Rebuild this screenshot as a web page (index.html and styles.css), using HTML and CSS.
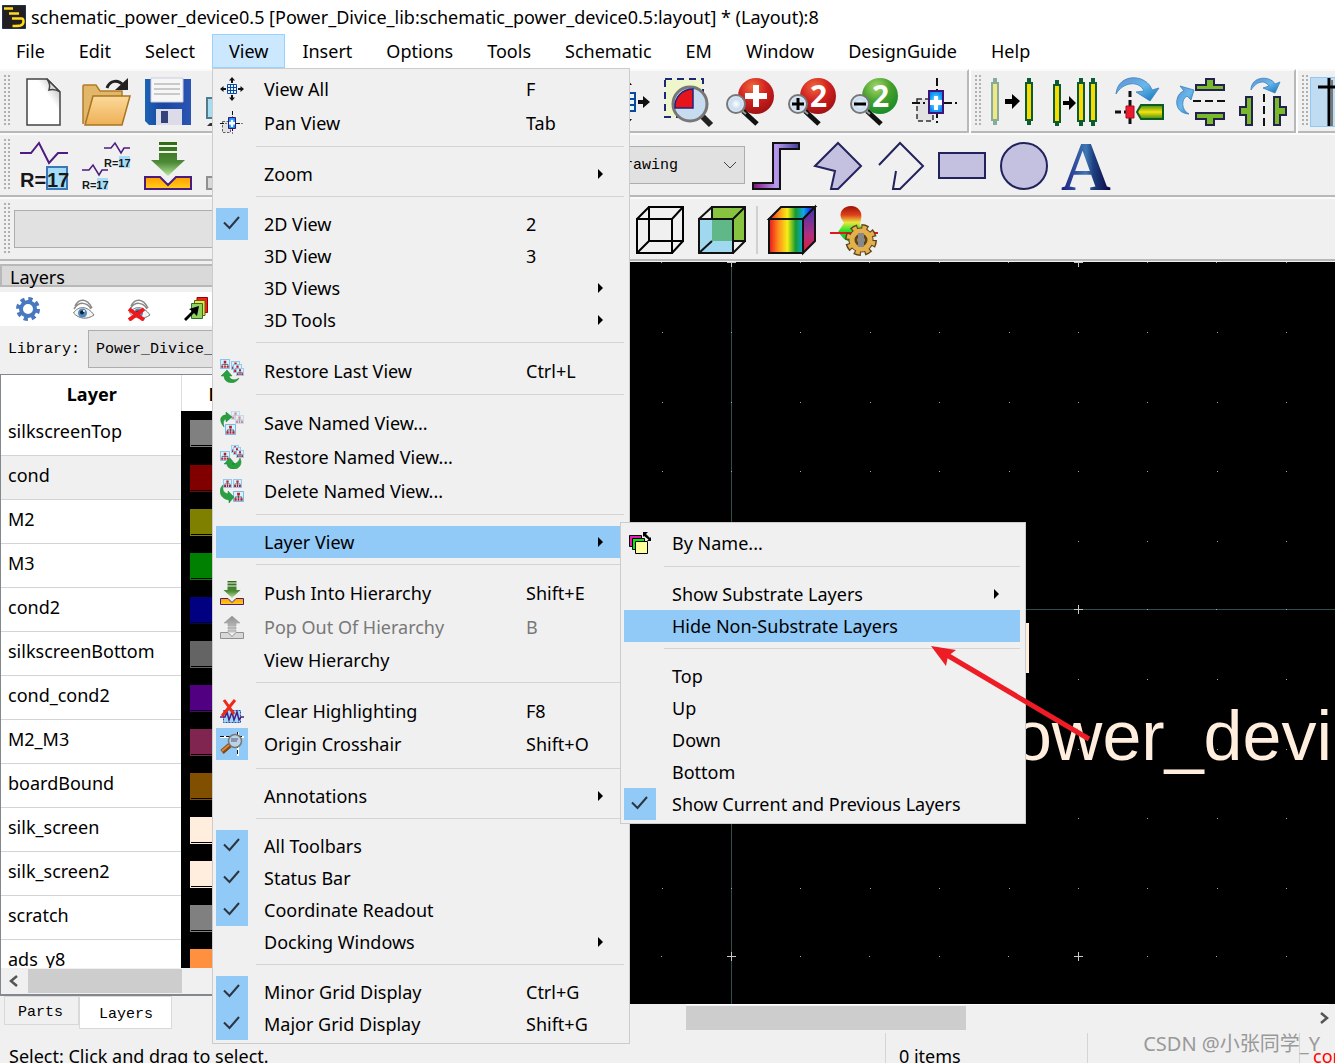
FILE: index.html
```html
<!DOCTYPE html>
<html lang="en">
<head>
<meta charset="utf-8">
<title>schematic_power_device0.5 (Layout):8</title>
<link rel="stylesheet" href="styles.css">
</head>
<body>
<svg class="defs" aria-hidden="true">
  <defs>
    <linearGradient id="gGreen" x1="0" y1="0" x2="0" y2="1"><stop offset="0" stop-color="#2f6b12"/><stop offset=".6" stop-color="#4d8a38"/><stop offset="1" stop-color="#b5e69a"/></linearGradient>
    <linearGradient id="gGray" x1="0" y1="0" x2="0" y2="1"><stop offset="0" stop-color="#8c8c8c"/><stop offset="1" stop-color="#d0d0d0"/></linearGradient>
    <linearGradient id="gGold" x1="0" y1="0" x2="0" y2="1"><stop offset="0" stop-color="#ff9d00"/><stop offset="1" stop-color="#ffd01c"/></linearGradient>
    <linearGradient id="gFolder" x1="0" y1="0" x2="0" y2="1"><stop offset="0" stop-color="#fbd99a"/><stop offset="1" stop-color="#eeb056"/></linearGradient>
    <linearGradient id="gPage" x1="1" y1="0" x2=".4" y2=".6"><stop offset="0" stop-color="#aaa"/><stop offset=".6" stop-color="#fff"/></linearGradient>
    <linearGradient id="gSave" x1="0" y1="0" x2="1" y2="0"><stop offset="0" stop-color="#1d62b5"/><stop offset=".4" stop-color="#1a45a0"/><stop offset="1" stop-color="#2b55b4"/></linearGradient>
    <linearGradient id="gBlue" x1="0" y1="0" x2="1" y2="1"><stop offset="0" stop-color="#5f8fd0"/><stop offset=".5" stop-color="#69b8ea"/><stop offset="1" stop-color="#0d70b8"/></linearGradient>
    <linearGradient id="gPort" x1="0" y1="0" x2="0" y2="1"><stop offset="0" stop-color="#3f8a1c"/><stop offset=".5" stop-color="#f6e40c"/><stop offset="1" stop-color="#3f8a1c"/></linearGradient>
    <linearGradient id="gLetter" x1="0" y1="0" x2="1" y2="0"><stop offset="0" stop-color="#1c1c80"/><stop offset=".5" stop-color="#3f78b4"/><stop offset=".65" stop-color="#1d3f80"/><stop offset="1" stop-color="#0b0340"/></linearGradient>
    <linearGradient id="gTrace" x1="0" y1="0" x2="1" y2="0"><stop offset="0" stop-color="#84107c"/><stop offset=".5" stop-color="#b79af0"/><stop offset="1" stop-color="#3f3f98"/></linearGradient>
    <linearGradient id="gRain" x1="0" y1="0" x2="1" y2="0"><stop offset="0" stop-color="#e8131b"/><stop offset=".2" stop-color="#ff8a1c"/><stop offset=".4" stop-color="#f5ee14"/><stop offset=".58" stop-color="#129a30"/><stop offset=".75" stop-color="#10a8e8"/><stop offset=".88" stop-color="#1040ff"/><stop offset="1" stop-color="#202090"/></linearGradient>
    <linearGradient id="gSide" x1="0" y1="0" x2="0" y2="1"><stop offset="0" stop-color="#3b36b0"/><stop offset=".6" stop-color="#b02f80"/><stop offset="1" stop-color="#e01b30"/></linearGradient>
    <linearGradient id="gLobe" x1="0" y1="0" x2="0" y2="1"><stop offset="0" stop-color="#9c1208"/><stop offset=".22" stop-color="#e0401c"/><stop offset=".4" stop-color="#e8e83c"/><stop offset=".6" stop-color="#2ee02e"/><stop offset="1" stop-color="#089a50"/></linearGradient>
    <radialGradient id="gRed" cx=".4" cy=".25" r=".8"><stop offset="0" stop-color="#f0683c"/><stop offset=".5" stop-color="#cf2020"/><stop offset="1" stop-color="#9c1010"/></radialGradient>
    <radialGradient id="gGrn" cx=".4" cy=".25" r=".8"><stop offset="0" stop-color="#a4d86c"/><stop offset=".5" stop-color="#46a02c"/><stop offset="1" stop-color="#128a28"/></radialGradient>
    <radialGradient id="gLens"><stop offset="0" stop-color="#fff"/><stop offset=".6" stop-color="#c8dcf0"/><stop offset="1" stop-color="#e8f0f8"/></radialGradient>
    <radialGradient id="gPan"><stop offset="0" stop-color="#fff"/><stop offset=".5" stop-color="#3cc0ff"/><stop offset="1" stop-color="#0a8cf0"/></radialGradient>
    <pattern id="grid" x="-10" y="-10" width="347" height="347" patternUnits="userSpaceOnUse">
      <path d="M6 10.500h9M10.500 6v9" stroke="#c8c8c8"/>
      <path stroke="#a8a8a8" stroke-dasharray="1 68 1 69 1 68 1 69 1 68" d="M79 10.500h280M10 80.500h345M10 150.500h345M10 219.500h345M10 289.500h345"/>
    </pattern>
    <symbol id="viewall" viewBox="0 0 24 24">
      <path fill="#111" d="M12 0l3 3.500h-2V6h-2V3.500H9zM12 24l3-3.500h-2V18h-2v2.500H9zM0 12l3.500-3v2H6v2H3.500v2zM24 12l-3.500-3v2H18v2h2.500v2z"/>
      <path fill="#e8f6ff" stroke="#0a4a9c" d="M7.500 7.500h9v9h-9zM10.500 7.500v9M13.500 7.500v9M7.500 10.500h9M7.500 13.500h9"/>
    </symbol>
    <symbol id="panview" viewBox="0 0 48 48">
      <path fill="#e2e2e2" stroke="#333" stroke-width="1.500" stroke-dasharray="5 3" d="M5 21h16v22H5z"/>
      <path stroke="#111" stroke-width="2" stroke-dasharray="8 3 2 3" fill="none" d="M25 0v48M0 25h48"/>
      <path fill="url(#gPan)" stroke="#3f1478" stroke-width="2" d="M17 13h14v22H17z"/>
      <path fill="#fff" d="M22 18h4v4h4v5h-4v5h-4v-5h-4v-5h4z"/>
    </symbol>
    <symbol id="push" viewBox="0 0 48 48">
      <path fill="url(#gGreen)" d="M15 0h18v3H15zM15 5h18v4H15zM15 11h18v7h8L24 34 7 18h8z"/>
      <path fill="url(#gGold)" stroke="#4a1c7c" stroke-width="2" d="M1 35h15l8 8 8-8h15v12H1z"/>
    </symbol>
    <symbol id="pop" viewBox="0 0 24 24">
      <path fill="url(#gGray)" stroke="#999" stroke-width=".5" d="M12 1l8 7h-4v3H8V8H4zM8 12h8v2H8zM8 15h8v2H8z"/>
      <path fill="#d8d8d8" stroke="#909090" d="M.5 17.500H8l4 4 4-4h7.500v6H.5z"/>
    </symbol>
    <symbol id="tree" viewBox="0 0 12 12">
      <path fill="#d8f0ff" stroke="#68b4e4" d="M.5.5h11v11H.5z"/><path fill="#c01828" d="M4.500 2h3v3h-3zM1.500 8h2.500v2.500H1.500zM5 8h2v2.500H5zM8 8h2.500v2.500H8z"/><path stroke="#333" stroke-width=".8" fill="none" d="M6 5v3M2.500 8V6.500h7V8"/>
    </symbol>
    <symbol id="lens" viewBox="0 0 48 48">
      <path stroke="#111" stroke-width="5" d="M17 33l14 13"/><path stroke="#999" stroke-width="2" d="M15 32l5 4"/>
      <circle cx="10" cy="26" r="9" fill="url(#gLens)" stroke="#777" stroke-width="2"/>
    </symbol>
    <symbol id="check" viewBox="0 0 32 32"><path fill="none" stroke="#2c3440" stroke-width="2" d="M8 14.500l5.500 5.500L23 9"/></symbol>
    <symbol id="arr" viewBox="0 0 6 10"><path d="M0 0l5 5-5 5z"/></symbol>
    <symbol id="eye" viewBox="0 0 24 24">
      <path fill="none" stroke="#888" stroke-width="1.500" d="M3 9c4-8 12-8 17 2M2 12C7 4 15 5 19 12"/>
      <path fill="#f4f4f4" stroke="#777" d="M1.500 16C6 9 15 8 22 18c-7 5-15 4-20.500-2z"/>
      <circle cx="10.500" cy="16" r="4.500" fill="#5088c0"/><circle cx="10" cy="15.500" r="2" fill="#123"/><circle cx="12" cy="14" r="1" fill="#fff"/>
    </symbol>
  </defs>
</svg>

<header class="titlebar">
  <svg class="logo" viewBox="0 0 24 24"><rect width="24" height="24" rx="2" fill="#231f20"/><path d="M.5.5h23v23H.5z" fill="none" stroke="#1c3450"/><path d="M2 3.500h9M7 8.500h10M10 13.500h9.500q2 0 2 3t-3 4q-2 .5-8 .5" fill="none" stroke="#ffd91a" stroke-width="2.500"/></svg>
  <h1>schematic_power_device0.5 [Power_Divice_lib:schematic_power_device0.5:layout] * (Layout):8</h1>
</header>

<nav class="menubar" aria-label="Main menu">
  <button>File</button><button>Edit</button><button>Select</button>
  <div class="open">
    <button aria-expanded="true">View</button>
    <div class="menu" role="menu">
      <button class="item tall"><svg class="ico"><use href="#viewall"/></svg><span>View All</span><kbd>F</kbd></button>
      <button class="item tall"><svg class="ico"><use href="#panview"/></svg><span>Pan View</span><kbd>Tab</kbd></button>
      <hr>
      <button class="item"><i></i><span>Zoom</span><kbd></kbd><svg class="arr"><use href="#arr"/></svg></button>
      <hr>
      <button class="item" role="menuitemcheckbox" aria-checked="true"><svg class="chk"><use href="#check"/></svg><span>2D View</span><kbd>2</kbd></button>
      <button class="item"><i></i><span>3D View</span><kbd>3</kbd></button>
      <button class="item"><i></i><span>3D Views</span><kbd></kbd><svg class="arr"><use href="#arr"/></svg></button>
      <button class="item"><i></i><span>3D Tools</span><kbd></kbd><svg class="arr"><use href="#arr"/></svg></button>
      <hr>
      <button class="item tall"><svg class="ico" viewBox="0 0 24 24"><use href="#tree" x="0" y="0" width="10" height="10"/><use href="#tree" x="11" y="2" width="9" height="9"/><use href="#tree" x="13" y="5" width="9" height="9"/><use href="#tree" x="16" y="9" width="8" height="8"/><path fill="#28a040" stroke="#1c7c30" stroke-width=".5" d="M1 17l6-6 5 6H9c1 4 6 5 10 2-3 7-15 6-15-2z"/></svg><span>Restore Last View</span><kbd>Ctrl+L</kbd></button>
      <hr>
      <button class="item tall"><svg class="ico" viewBox="0 0 24 24"><g opacity=".5"><use href="#tree" x="11" y="0" width="9" height="9"/><use href="#tree" x="15" y="4" width="9" height="9"/></g><use href="#tree" x="5" y="13" width="11" height="11"/><path fill="#28a040" stroke="#1c7c30" stroke-width=".5" d="M6 1l6 5-6 5V8c-3 1-3 4-2 8C-2 9 1 4 6 4z"/></svg><span>Save Named View...</span></button>
      <button class="item tall"><svg class="ico" viewBox="0 0 24 24"><use href="#tree" x="11" y="0" width="8" height="8"/><use href="#tree" x="13" y="2" width="8" height="8"/><use href="#tree" x="16" y="5" width="8" height="8"/><use href="#tree" x="0" y="6" width="10" height="10"/><path fill="#28a040" stroke="#1c7c30" stroke-width=".5" d="M4 19l6-6 5 6h-3c5 0 7-3 8-6 3 6-1 11-6 11-4 0-7-2-7-5z"/></svg><span>Restore Named View...</span></button>
      <button class="item tall"><svg class="ico" viewBox="0 0 24 24"><use href="#tree" x="3" y="0" width="9" height="9"/><use href="#tree" x="13" y="0" width="9" height="9"/><use href="#tree" x="13" y="12" width="11" height="11"/><path fill="#28a040" stroke="#1c7c30" stroke-width=".5" d="M3 6c-1 7 2 8 5 9v-3l6 6-5 6v-3C1 20-3 12 3 6z"/></svg><span>Delete Named View...</span></button>
      <hr>
      <div class="branch">
        <button class="item active" aria-expanded="true"><i></i><span>Layer View</span><kbd></kbd><svg class="arr"><use href="#arr"/></svg></button>
        <div class="menu submenu" role="menu">
          <button class="item tall"><svg class="ico" viewBox="0 0 24 24"><g stroke="#000"><path fill="#e818b8" d="M1.500 4.500h12v11h-12z"/><path fill="#00f000" d="M4.500 7.500h12v11h-12z"/><path fill="#ffffa0" d="M7.500 10.500h12v12h-12z"/></g><path d="M15 1h5l-2 2 4 4 1-1v4h-4l1.500-1.500L16 5l-1 1z"/></svg><span>By Name...</span></button>
          <hr>
          <button class="item"><i></i><span>Show Substrate Layers</span><kbd></kbd><svg class="arr"><use href="#arr"/></svg></button>
          <button class="item active"><i></i><span>Hide Non-Substrate Layers</span></button>
          <hr>
          <button class="item"><i></i><span>Top</span></button>
          <button class="item"><i></i><span>Up</span></button>
          <button class="item"><i></i><span>Down</span></button>
          <button class="item"><i></i><span>Bottom</span></button>
          <button class="item" role="menuitemcheckbox" aria-checked="true"><svg class="chk"><use href="#check"/></svg><span>Show Current and Previous Layers</span></button>
          <svg class="pointer" viewBox="0 0 162 98"><path d="M16 9L158 93" stroke="#ee1c25" stroke-width="5" fill="none"/><path fill="#ee1c25" d="M0 0l25 4-8 6-2 10z"/></svg>
        </div>
      </div>
      <hr>
      <button class="item tall"><svg class="ico"><use href="#push"/></svg><span>Push Into Hierarchy</span><kbd>Shift+E</kbd></button>
      <button class="item tall" disabled><svg class="ico"><use href="#pop"/></svg><span>Pop Out Of Hierarchy</span><kbd>B</kbd></button>
      <button class="item"><i></i><span>View Hierarchy</span></button>
      <hr>
      <button class="item tall"><svg class="ico" viewBox="0 0 24 24"><path fill="#9cd8f8" stroke="#1c50b0" stroke-dasharray="2 1" d="M3.500 11.500h17v12h-17z"/><path fill="none" stroke="#4a1c80" stroke-width="1.500" d="M0 18h5l2-5 2 8 3-8 2 8 3-8 2 8 2-3h3"/><path fill="none" stroke="#f02818" stroke-width="3" d="M4 1l10 14M15 1L2 17"/></svg><span>Clear Highlighting</span><kbd>F8</kbd></button>
      <button class="item" role="menuitemcheckbox" aria-checked="true"><svg class="chk" viewBox="0 0 32 32"><path stroke="#fff" stroke-width="2" d="M4 9h24M22 4v24"/><path stroke="#111" stroke-dasharray="4 2" d="M4 8.500h24M21.500 4v24"/><path stroke="#8a4810" stroke-width="5" d="M14 17l-8 7"/><path stroke="#d88840" stroke-width="2" d="M13 17l-7 6"/><circle cx="19" cy="13" r="6.500" fill="#bcd4e4" stroke="#777" stroke-width="1.500"/><path stroke="#557" d="M15 11h7M15 13h6"/></svg><span>Origin Crosshair</span><kbd>Shift+O</kbd></button>
      <hr class="late">
      <button class="item"><i></i><span>Annotations</span><kbd></kbd><svg class="arr"><use href="#arr"/></svg></button>
      <hr>
      <button class="item" role="menuitemcheckbox" aria-checked="true"><svg class="chk"><use href="#check"/></svg><span>All Toolbars</span></button>
      <button class="item" role="menuitemcheckbox" aria-checked="true"><svg class="chk"><use href="#check"/></svg><span>Status Bar</span></button>
      <button class="item" role="menuitemcheckbox" aria-checked="true"><svg class="chk"><use href="#check"/></svg><span>Coordinate Readout</span></button>
      <button class="item"><i></i><span>Docking Windows</span><kbd></kbd><svg class="arr"><use href="#arr"/></svg></button>
      <hr>
      <button class="item" role="menuitemcheckbox" aria-checked="true"><svg class="chk"><use href="#check"/></svg><span>Minor Grid Display</span><kbd>Ctrl+G</kbd></button>
      <button class="item" role="menuitemcheckbox" aria-checked="true"><svg class="chk"><use href="#check"/></svg><span>Major Grid Display</span><kbd>Shift+G</kbd></button>
    </div>
  </div>
  <button>Insert</button><button>Options</button><button>Tools</button><button>Schematic</button><button>EM</button><button>Window</button><button>DesignGuide</button><button>Help</button>
</nav>

<div class="toolrow">
  <div class="toolbar">
    <div class="tools lead">
      <button aria-label="New"><svg viewBox="0 0 48 48"><path fill="url(#gPage)" stroke="#444" stroke-width="1.500" d="M7 1h20l13 13v33H7z"/><path fill="#ddd" stroke="#444" stroke-width="1.500" d="M27 1c3 4 3 8 2 11 4-1 8 0 11 2z"/></svg></button>
      <button aria-label="Open"><svg viewBox="0 0 48 48"><path fill="#e3b76a" stroke="#b07c28" stroke-width="1.500" d="M1 46V8q0-1 1-1h12l4 6h22v8"/><path fill="url(#gFolder)" stroke="#a87422" stroke-width="1.500" d="M3 47l8-29h37l-8 29z"/><path fill="none" stroke="#222" stroke-width="3" d="M25 10c3-8 11-9 17-2"/><path fill="#222" d="M46 0v12H33z"/></svg></button>
      <button aria-label="Save"><svg viewBox="0 0 48 48"><path fill="url(#gSave)" d="M1 1h46v46H5l-4-4z"/><path fill="#f6f6f6" stroke="#ccd" d="M7 0h32v24H7z"/><path stroke="#bbb" stroke-width="1.500" d="M10 6h26M10 11h26M10 16h26"/><path fill="#dcdce8" d="M12 31h26v16H12z"/><path fill="#34427c" d="M17 33h7v12h-7z"/></svg></button>
      <button aria-label="Print"><svg viewBox="0 0 48 48"><path fill="#a8dcf0" stroke="#55788c" stroke-width="2" d="M1 20h44v20H1z"/><path fill="#333" d="M4 45h40v3H1z"/></svg></button>
    </div>
    <div class="tools">
      <button aria-label="View all"><svg><use href="#viewall"/></svg></button>
      <button aria-label="Zoom to area"><svg viewBox="0 0 48 48"><path fill="#f0f6cc" stroke="#1c2878" stroke-width="2" stroke-dasharray="7 5" d="M1 1h38v38H1z"/><path stroke="#222" stroke-width="6" d="M38 38l9 9"/><circle cx="26" cy="26" r="17" fill="#c8dcf0" stroke="#777" stroke-width="3"/><path fill="#e8141c" stroke="#23207c" stroke-width="1.500" d="M29 11v19H11c-1-10 7-19 18-19z"/></svg></button>
      <button aria-label="Zoom in"><svg viewBox="0 0 48 48"><circle cx="30" cy="18" r="18" fill="url(#gRed)"/><path fill="#fff" d="M27 7h6v8h8v6h-8v8h-6v-8h-8v-6h8z"/><use href="#lens"/></svg></button>
      <button aria-label="Zoom in by 2"><svg viewBox="0 0 48 48"><circle cx="30" cy="18" r="18" fill="url(#gRed)"/><text x="22" y="29" class="num">2</text><use href="#lens"/><path stroke="#000" stroke-width="3" d="M10 20v12M4 26h12"/></svg></button>
      <button aria-label="Zoom out by 2"><svg viewBox="0 0 48 48"><circle cx="30" cy="18" r="18" fill="url(#gGrn)"/><text x="22" y="29" class="num">2</text><use href="#lens"/><path stroke="#000" stroke-width="3" d="M4 26h12"/></svg></button>
      <button aria-label="Pan view"><svg><use href="#panview"/></svg></button>
    </div>
  </div>
  <div class="toolbar">
    <div class="tools">
      <button aria-label="Move"><svg viewBox="0 0 48 48"><g opacity=".45"><path stroke="#0c5c30" stroke-width="4" d="M4 0v47"/><path fill="#f0e000" stroke="#0c5c30" stroke-width="2" d="M1 5h6v37H1z"/></g><path d="M14 21h7v-5l8 7-8 8v-5h-7z"/><path stroke="#0c5c30" stroke-width="4" d="M38 0v47"/><path fill="#f8dc00" stroke="#0c5c30" stroke-width="2" d="M35 5h6v37h-6z"/></svg></button>
      <button aria-label="Copy"><svg viewBox="0 0 48 48"><path stroke="#0c5c30" stroke-width="4" d="M4 2v46M28 0v48M40 0v48"/><path fill="#f8dc00" stroke="#0c5c30" stroke-width="2" d="M1 7h6v37H1zM25 5h6v38h-6zM37 5h6v38h-6z"/><path d="M10 23h6v-5l7 7-7 7v-5h-6z"/></svg></button>
      <button aria-label="Rotate"><svg viewBox="0 0 48 48"><path fill="url(#gBlue)" stroke="#3a80c0" stroke-width=".8" d="M1 16C3-6 32-4 37 12l7-2-9 13-14-9 8-1C24 2 8 4 1 16z"/><path stroke="#111" stroke-width="3" stroke-dasharray="6 3" d="M15 13v35M0 34h12"/><path fill="#e81c30" stroke="#a80c18" d="M11 28h8v12h-8z"/><path fill="url(#gPort)" stroke="#0c5c20" stroke-width="2" d="M48 27H26l-4 7 4 7h22z"/></svg></button>
      <button aria-label="Mirror about X"><svg viewBox="0 0 48 48"><path fill="url(#gBlue)" stroke="#3a80c0" stroke-width=".8" d="M12 36C-5 35-2 15 7 13L3 8l14 4-3 10-4-4c-6 3-6 14 2 18z"/><path fill="#7ab82c" stroke="#22224c" stroke-width="2" d="M19 7h10V1h8v6h10v5H19zM19 35h28v6H37v6h-8v-6H19z"/><path stroke="#111" stroke-width="2" stroke-dasharray="8 4" d="M16 23h32"/></svg></button>
      <button aria-label="Mirror about Y"><svg viewBox="0 0 48 48"><path fill="url(#gBlue)" stroke="#3a80c0" stroke-width=".8" d="M12 12C12-2 31-3 36 6l5-2-5 11-12-5 6-2C25 1 17 4 12 12z"/><path fill="#7ab82c" stroke="#22224c" stroke-width="2" d="M7 19h6v28H7V37H1v-8h6zM35 19h6v10h6v8h-6v10h-6z"/><path stroke="#111" stroke-width="2" stroke-dasharray="8 4" d="M25 16v32"/></svg></button>
    </div>
  </div>
  <div class="toolbar grow">
    <div class="tools">
      <button class="pressed" aria-label="Crosshair"><svg viewBox="0 0 48 48"><path stroke="#777" stroke-width="2" d="M14 2v46"/><path stroke="#000" stroke-width="3" d="M11 0v48M0 9h48"/></svg></button>
    </div>
  </div>
</div>

<div class="toolrow">
  <div class="toolbar grow">
    <div class="tools half">
      <button aria-label="Edit value"><svg viewBox="0 0 48 48"><path fill="none" stroke="#4c1c80" stroke-width="2" d="M0 11h11l8-10 10 20 9-10h10"/><path fill="#a4dcf8" stroke="#3c78b8" stroke-width="2" d="M27 25h20v22H27z"/><text x="0" y="45" class="val">R=</text><text x="27" y="45" class="val">17</text></svg></button>
      <button aria-label="Edit values"><svg viewBox="0 0 48 48"><path fill="none" stroke="#4c1c80" stroke-width="1.500" d="M22 6h7l4-5 6 10 3-5h6M0 28h7l4-5 6 10 3-5h6"/><path fill="#a4dcf8" d="M37 14h11v12H37zM15 36h11v12H15z"/><text x="22" y="25" class="val sm">R=17</text><text x="0" y="47" class="val sm">R=17</text></svg></button>
      <button aria-label="Push into hierarchy"><svg><use href="#push"/></svg></button>
      <button aria-label="Pop out" disabled><svg viewBox="0 0 48 48"><path fill="#d8d8d8" stroke="#909090" stroke-width="2" d="M1 35h46v12H1z"/></svg></button>
    </div>
    <select class="combo entry" aria-label="Entry layer"><option>silk_screen:drawing</option></select>
    <div class="tools">
      <button aria-label="Trace"><svg viewBox="0 0 48 48"><path fill="url(#gTrace)" stroke="#111" stroke-width="2" d="M1 41h20V1h26v6H28v40H1z"/></svg></button>
      <button aria-label="Polygon"><svg viewBox="0 0 48 48"><path fill="#c4c0e0" stroke="#22225c" stroke-width="2" d="M24 1l23 23-23 23h-7l4-18L1 24z"/></svg></button>
      <button aria-label="Polyline"><svg viewBox="0 0 48 48"><path fill="none" stroke="#22225c" stroke-width="2" d="M3 23L24 1l23 23-23 23h-7l3-18"/></svg></button>
      <button aria-label="Rectangle"><svg viewBox="0 0 48 48"><path fill="#c4c0e0" stroke="#22225c" stroke-width="2" d="M1 11h46v25H1z"/></svg></button>
      <button aria-label="Circle"><svg viewBox="0 0 48 48"><circle cx="24" cy="24" r="23" fill="#c4c0e0" stroke="#22225c" stroke-width="2"/></svg></button>
      <button aria-label="Text"><svg viewBox="0 0 48 48"><text x="-1" y="48" class="glyph" fill="url(#gLetter)">A</text></svg></button>
    </div>
  </div>
</div>

<div class="toolrow">
  <div class="toolbar grow">
    <select class="combo blank" aria-label="Net"><option></option></select>
    <div class="tools">
      <button aria-label="Wireframe"><svg viewBox="0 0 48 48"><path fill="none" stroke="#000" stroke-width="2" d="M1 13h35v34H1zM13 1h34v34H13zM1 13L13 1M36 13L47 1M1 47l12-12M36 47l11-12"/></svg></button>
      <button aria-label="Shaded"><svg viewBox="0 0 48 48"><path fill="#88c440" d="M14 1h33v34H14z"/><path fill="#a0d8f0" d="M1 13h34v34H1z"/><path fill="#60b888" d="M14 13h21v22H14z"/><path fill="none" stroke="#111" stroke-width="2" d="M1 13h34v34H1zM14 13V1h33v34H36M1 13L14 1M35 13L47 1M1 47l13-12M35 47l12-12"/></svg></button>
      <span class="divider"></span>
      <button aria-label="Color plot"><svg viewBox="0 0 48 48"><path fill="url(#gRain)" stroke="#111" stroke-width="2" d="M1 13h34v34H1zM1 13L13 1h34L35 13z"/><path fill="url(#gSide)" stroke="#111" stroke-width="2" d="M35 13L47 1v34L35 47z"/></svg></button>
      <button aria-label="Far field"><svg viewBox="0 0 48 48"><path fill="url(#gLobe)" d="M21 0c7 0 12 6 10 13l-1 6 7 8-8 14-15-8-6-7 6-9-3-5C9 5 14 0 21 0z"/><path stroke="#e01818" stroke-width="2" d="M0 27h48"/><circle cx="31" cy="34" r="12" fill="none" stroke="#5c4418" stroke-width="8" stroke-dasharray="6 3.420"/><circle cx="31" cy="34" r="8" fill="#d8e0dc" stroke="#5c4418" stroke-width="9"/><circle cx="31" cy="34" r="12" fill="none" stroke="#e4b04c" stroke-width="5" stroke-dasharray="4 5.420" stroke-dashoffset="-1"/><circle cx="31" cy="34" r="9" fill="none" stroke="#e4b04c" stroke-width="5"/><path fill="#888" d="M28 27h6v14h-6z"/></svg></button>
    </div>
  </div>
</div>

<main>
  <aside class="dock">
    <h2>Layers</h2>
    <div class="docktools">
      <button aria-label="Settings"><svg viewBox="0 0 24 24"><circle cx="12" cy="12" r="9.500" fill="none" stroke="#4878c0" stroke-width="5" stroke-dasharray="4 3.460"/><circle cx="12" cy="12" r="7" fill="none" stroke="#4878c0" stroke-width="4"/></svg></button>
      <button aria-label="Show all"><svg><use href="#eye"/></svg></button>
      <button aria-label="Hide all"><svg viewBox="0 0 24 24"><use href="#eye"/><path stroke="#f01818" stroke-width="4" d="M1 12l15 11M16 12L1 23"/></svg></button>
      <button aria-label="Pick layer"><svg viewBox="0 0 24 24"><path fill="#f02020" stroke="#900" d="M13 .5h10.500v15H13z"/><path fill="#f0e040" stroke="#665c10" d="M10.500 3.500h10.500v15H10.500z"/><path fill="#90d060" stroke="#2c7020" d="M7.500 6.500h11v15h-11z"/><path d="M15 9l-2 10-3-3-8 8-2-2 8-8-3-2z"/></svg></button>
    </div>
    <div class="library"><label for="lib">Library:</label><select id="lib" class="combo"><option>Power_Divice_lib</option></select></div>
    <div class="list">
      <div class="view">
      <table>
        <thead><tr><th>Layer</th><th class="second">Fill</th></tr></thead>
        <tbody>
          <tr><td>silkscreenTop</td><td><i style="background-color:#808080"></i></td></tr>
          <tr class="sel"><td>cond</td><td><i style="background-color:#800000"></i></td></tr>
          <tr><td>M2</td><td><i style="background-color:#808000"></i></td></tr>
          <tr><td>M3</td><td><i style="background-color:#008000"></i></td></tr>
          <tr><td>cond2</td><td><i style="background-color:#000080"></i></td></tr>
          <tr><td>silkscreenBottom</td><td><i style="background-color:#646464"></i></td></tr>
          <tr><td>cond_cond2</td><td><i style="background-color:#500080"></i></td></tr>
          <tr><td>M2_M3</td><td><i style="background-color:#802550"></i></td></tr>
          <tr><td>boardBound</td><td><i style="background-color:#805000"></i></td></tr>
          <tr><td>silk_screen</td><td><i style="background-color:#ffeedd"></i></td></tr>
          <tr><td>silk_screen2</td><td><i style="background-color:#ffeedd"></i></td></tr>
          <tr><td>scratch</td><td><i style="background-color:#808080"></i></td></tr>
          <tr><td>ads_y8</td><td><i style="background-color:#ff9040"></i></td></tr>
        </tbody>
      </table>
      </div>
      <div class="scroll"><svg viewBox="0 0 10 12"><path fill="none" stroke="#555" stroke-width="2.500" d="M8 1L2 6l6 5"/></svg><span></span></div>
    </div>
    <div class="tabs"><button>Parts</button><button class="current">Layers</button></div>
  </aside>
  <section class="workspace">
    <svg class="canvas">
      <rect width="100%" height="100%" fill="#000"/>
      <path d="M347.500 0v2000M0 347.500h4000" stroke="#2f4f4f"/>
      <rect width="100%" height="100%" fill="url(#grid)"/>
      <rect x="600" y="361" width="45" height="50" fill="#ffeedd"/>
      <text x="590" y="498">power_device0.5</text>
    </svg>
    <div class="hscroll"><span></span><svg viewBox="0 0 10 12"><path fill="none" stroke="#555" stroke-width="2.500" d="M2 1l6 5-6 5"/></svg></div>
  </section>
</main>

<footer class="status">
  <span class="msg">Select: Click and drag to select.</span>
  <span class="cell items">0 items</span>
  <span class="cell gap"></span>
  <span class="cell layer">cond:drawing</span>
  <span class="mark">CSDN @小张同学_Y</span>
</footer>
</body>
</html>
```
FILE: styles.css
```css
* { box-sizing: border-box; }
body {
  margin: 0;
  height: 100vh;
  display: flex;
  flex-direction: column;
  overflow: hidden;
  background: #f0f0f0;
  color: #000;
  font-family: "Noto Sans", "Noto Sans CJK SC", sans-serif;
  font-size: 18px;
}
button, kbd {
  font: inherit;
  color: inherit;
}
button {
  margin: 0;
  padding: 0;
  border: 0;
  background: none;
  text-align: left;
}
.defs { position: absolute; width: 0; height: 0; }

/* Title and menu bar */
.titlebar {
  flex: none;
  height: 34px;
  padding-left: 2px;
  display: flex;
  align-items: center;
  gap: 5px;
  background: #fff;
}
.titlebar h1 { margin: 0; font-size: 18px; font-weight: 400; white-space: nowrap; }
.logo { width: 24px; height: 24px; }
.menubar {
  flex: none;
  height: 35px;
  margin-left: -1px;
  display: flex;
  background: #fff;
}
.menubar > button, .open > button { height: 34px; padding: 0 17px; white-space: nowrap; }
.open { position: relative; z-index: 5; }
.open > button { background: #cce8ff; box-shadow: inset 0 0 0 1px #99d1ff; }

/* Drop-down menus */
.menu {
  position: absolute;
  top: 34px;
  left: 0;
  width: 418px;
  padding: 3px 5px 3px 3px;
  border: 1px solid #ccc;
  background: #f0f0f0;
}
.item {
  display: grid;
  grid-template-columns: 48px 1fr 72px 26px;
  align-items: center;
  width: 100%;
  height: 32px;
  white-space: nowrap;
}
.item.tall { height: 34px; }
.item.active { background: #91c9f7; }
.item:disabled { color: #787878; }
.ico { width: 24px; height: 24px; margin-left: 4px; }
.chk { width: 32px; height: 100%; background: #91c9f7; }
.arr { width: 6px; height: 10px; }
.menu hr {
  height: 1px;
  margin: 6px 0 11px 40px;
  border: 0;
  background: #d4d4d4;
}
.menu .late { margin-top: 8px; }
.branch { position: relative; }
.submenu { top: -4px; left: 404px; width: 406px; }
.pointer { position: absolute; left: 310px; top: 123px; width: 162px; height: 98px; }

/* Toolbars */
.toolrow { flex: none; display: flex; gap: 2px; height: 64px; background: #fff; }
.toolbar {
  position: relative;
  display: flex;
  padding: 7px 0 0 13px;
  border-top: 2px solid #fafafa;
  border-bottom: 2px solid #b8b8b8;
  border-right: 2px solid #b8b8b8;
  background: #f0f0f0;
}
.toolbar::before {
  content: "";
  position: absolute;
  left: 4px;
  top: 4px;
  bottom: 4px;
  width: 6px;
  background: radial-gradient(circle at 1px 1px, #b0b0b0 1px, transparent 1px) 0 0 / 4px 4px;
}
.toolbar.grow { flex: 1; border-right: 0; }
.tools { display: flex; flex: none; }
.tools.lead { width: 582px; }
.tools.half { width: 486px; }
.tools button { width: 62px; height: 48px; display: flex; justify-content: center; }
.tools svg { width: 48px; height: 48px; overflow: visible; }
.tools .pressed { background: #c0dcf3; box-shadow: 0 0 0 1px #90c8f6; }
.divider { width: 2px; height: 48px; margin: 0 3px; background: #d0d0d0; }
.num { font: bold 30px "Noto Sans", sans-serif; fill: #fff; }
.val { font: bold 20px "Liberation Sans Narrow", "Liberation Sans", sans-serif; fill: #181818; }
.val.sm { font-size: 11px; }
.glyph { font: bold 69px "Liberation Serif", serif; }
.combo {
  height: 38px;
  padding: 0 7px;
  border: 1px solid #adadad;
  border-radius: 0;
  appearance: none;
  background: #e1e1e1;
  color: #000;
  font: 15px "Liberation Mono", monospace;
}
.entry {
  width: 246px;
  margin: 4px 0;
  background:
    linear-gradient(-45deg, transparent 44%, #444 44% 56%, transparent 56%) right 8px center / 6px 6px no-repeat,
    linear-gradient(45deg, transparent 44%, #444 44% 56%, transparent 56%) right 14px center / 6px 6px no-repeat,
    #e1e1e1;
}
.blank { width: 600px; margin: 4px 15px 0 1px; }

/* Layers dock */
main { flex: 1; display: flex; min-height: 0; padding-top: 1px; }
.dock { flex: none; width: 384px; display: flex; flex-direction: column; min-height: 0; }
.dock h2 {
  margin: 2px 0 5px;
  height: 23px;
  padding-left: 8px;
  border: 2px solid #b8b8b8;
  background: #d9d9d9;
  font-size: 18px;
  font-weight: 400;
  line-height: 22px;
}
.docktools { display: flex; gap: 32px; height: 34px; padding: 5px 16px; background: #fff; }
.docktools button, .docktools svg { width: 24px; height: 24px; display: block; }
.library { display: flex; align-items: center; gap: 8px; padding: 4px 8px 6px; font: 15px "Liberation Mono", monospace; }
.library .combo { flex: 1; }
.list { flex: 1; min-height: 0; display: flex; flex-direction: column; border: 1px solid #828790; border-bottom-width: 2px; background: #fff; }
.view { flex: 1; min-height: 0; overflow: hidden; }
table { width: 100%; border-collapse: collapse; table-layout: fixed; }
th { height: 36px; padding: 2px 0 0; font-weight: 700; }
th:first-child { width: 180px; padding-left: 2px; }
.second { padding-left: 27px; text-align: left; border-left: 1px solid #ddd; }
td { height: 44px; padding: 0 0 4px 7px; border-bottom: 1px solid #d4d4d4; }
td + td { padding: 2px 0 0 9px; background: #000; border-bottom-color: #000; }
td i {
  display: block;
  width: 100px;
  height: 27px;
  background-image: linear-gradient(#000, #000);
  background-position: 1px 25px;
  background-size: 100% 1px;
  background-repeat: no-repeat;
}
.sel td:first-child { background: #f0f0f0; }
.scroll { flex: none; display: flex; align-items: center; height: 26px; background: #f0f0f0; }
.scroll svg { width: 10px; height: 12px; margin: 0 9px 0 8px; }
.scroll span { width: 154px; height: 24px; background: #cdcdcd; }
.tabs { flex: none; display: flex; height: 37px; padding-left: 4px; font: 15px "Liberation Mono", monospace; }
.tabs button { width: 75px; height: 29px; padding: 4px 0 0 13px; border: 1px solid #d9d9d9; }
.tabs .current { width: 93px; height: 33px; padding-left: 19px; background: #fff; }

/* Layout canvas */
.workspace { flex: 1; min-width: 0; display: flex; flex-direction: column; }
.canvas { flex: 1; width: 100%; min-height: 0; }
.canvas text { font: 70px "Liberation Sans", sans-serif; fill: #ffeedd; }
.hscroll { flex: none; display: flex; justify-content: space-between; align-items: center; height: 26px; margin: 0 6px 3px 302px; border-top: 1px solid #fff; }
.hscroll span { width: 280px; height: 24px; background: #cdcdcd; }
.hscroll svg { width: 10px; height: 12px; }

/* Status bar */
.status { position: relative; flex: none; display: flex; height: 30px; overflow: hidden; line-height: 46px; white-space: nowrap; }
.msg { flex: 1; padding-left: 9px; }
.cell { padding-left: 13px; border-left: 1px solid #d4d4d4; }
.items { width: 202px; }
.gap { width: 212px; }
.layer { width: 36px; color: #f00; overflow: hidden; }
.mark { position: absolute; right: 15px; top: 0; font-size: 20px; line-height: 22px; color: #999; }
```
